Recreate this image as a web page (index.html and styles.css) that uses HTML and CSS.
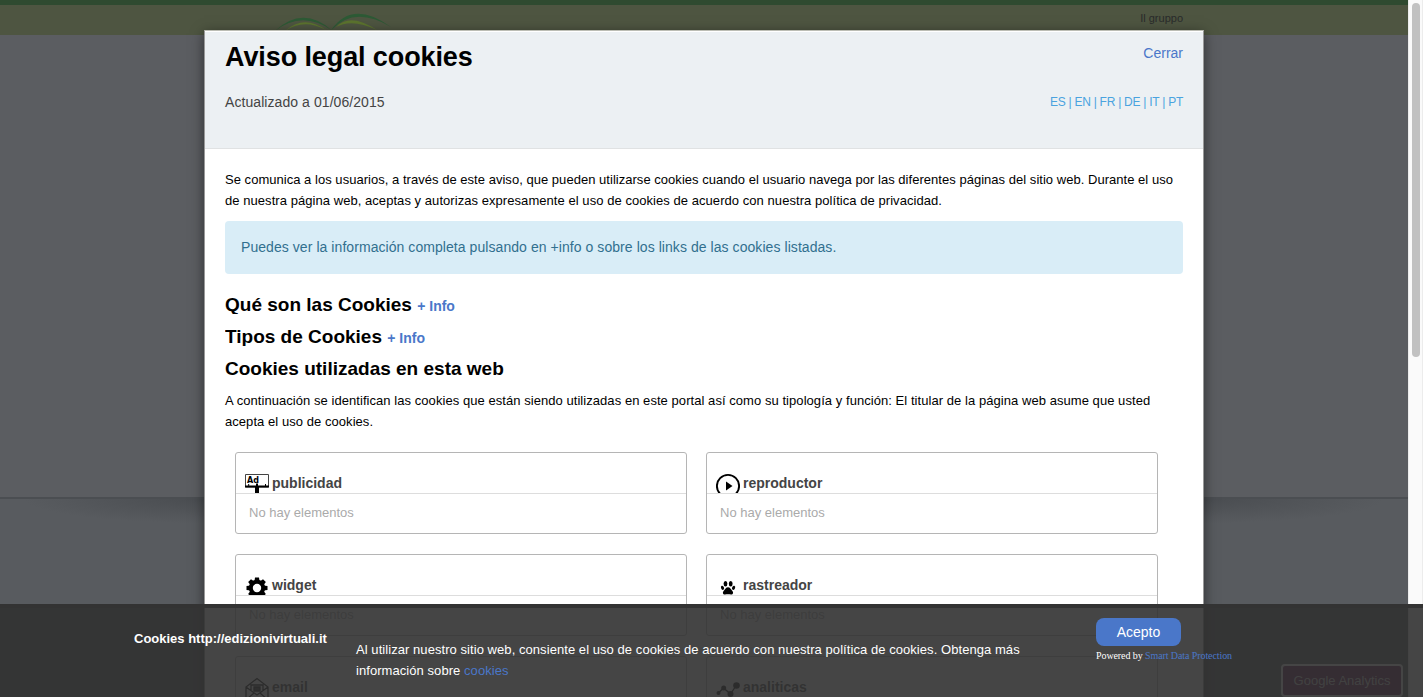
FILE: index.html
```
<!DOCTYPE html>
<html lang="es">
<head>
<meta charset="utf-8">
<title>Aviso legal cookies</title>
<link rel="stylesheet" href="styles.css">
</head>
<body>
<div class="page">
  <div class="site">
    <div class="stripe"></div>
    <div class="topbar">
      <svg class="logo" width="120" height="22" viewBox="0 0 120 22">
        <path d="M11 18Q30 1 52 17Q30 5 11 18ZM62 14Q76-1 103 17Q78 5 62 14Z" fill="#5b732e"/>
        <path d="M1 18Q29-8 58 17.500Q28-3 1 18ZM57 17.500Q78-14 117 14Q80-8 57 17.500Z" fill="#2d5a35"/>
      </svg>
      <span class="group">Il gruppo</span>
    </div>
    <div class="main"></div>
    <div class="footer"><span class="shade left"></span><span class="shade right"></span></div>
  </div>
  <div class="scrollbar"><div class="thumb"></div></div>
</div>
<div class="analytics">Google Analytics</div>

<section class="modal">
  <header class="head">
    <div class="row"><h1>Aviso legal cookies</h1><a class="close">Cerrar</a></div>
    <div class="row meta"><span>Actualizado a 01/06/2015</span><span class="langs">ES | EN | FR | DE | IT | PT</span></div>
  </header>
  <div class="body">
    <p><span class="l1">Se comunica a los usuarios, a través de este aviso, que pueden utilizarse cookies cuando el usuario navega por las diferentes páginas del sitio web. Durante el uso</span><br>de nuestra página web, aceptas y autorizas expresamente el uso de cookies de acuerdo con nuestra política de privacidad.</p>
    <div class="alert">Puedes ver la información completa pulsando en +info o sobre los links de las cookies listadas.</div>
    <h2>Qué son las Cookies <a>+ Info</a></h2>
    <h2>Tipos de Cookies <a>+ Info</a></h2>
    <h2>Cookies utilizadas en esta web</h2>
    <p class="intro">A continuación se identifican las cookies que están siendo utilizadas en este portal así como su tipología y función: El titular de la página web asume que usted<br>acepta el uso de cookies.</p>
    <div class="cards">
      <div class="card"><div class="title">
        <svg width="24" height="24" viewBox="0 0 24 24"><path d="M.5 1.500h23v12.500H.5z" fill="#fff" stroke="#444"/><path d="M0 12.500h24v2H0zM10 14h4v10h-4zM3.200 11h1v2h-1zM11 10.500h2v2h-2zM20 11h1v2h-1z"/><text x="2" y="9.500" class="ad">Ad</text></svg>publicidad</div><div class="empty">No hay elementos</div></div>
      <div class="card"><div class="title">
        <svg width="24" height="24" viewBox="0 0 24 24"><circle cx="12" cy="13" r="11.100" fill="none" stroke="#000" stroke-width="1.900"/><path d="M10 8.500l6.500 4.500-6.500 4.500z"/></svg>reproductor</div><div class="empty">No hay elementos</div></div>
      <div class="card"><div class="title">
        <svg width="24" height="24" viewBox="0 0 24 24"><g transform="translate(12 13)"><path d="M-2-10.500h4l.6 4h-5.200zM-2 10.500h4l.6-4h-5.200z" id="teeth"/><use href="#teeth" transform="rotate(45)"/><use href="#teeth" transform="rotate(90)"/><use href="#teeth" transform="rotate(135)"/><circle r="6.200" fill="none" stroke="#000" stroke-width="4"/></g></svg>widget</div><div class="empty">No hay elementos</div></div>
      <div class="card"><div class="title">
        <svg width="24" height="24" viewBox="0 0 24 24"><ellipse cx="9.500" cy="8.800" rx="1.900" ry="2.700"/><ellipse cx="14.700" cy="8.800" rx="1.900" ry="2.700"/><ellipse cx="6.500" cy="12.800" rx="1.500" ry="2.200" transform="rotate(-20 6.500 12.800)"/><ellipse cx="17.600" cy="12.800" rx="1.500" ry="2.200" transform="rotate(20 17.600 12.800)"/><path d="M12 12.300c2 0 3 2.200 4 3.200 2 2 1 4.200-1 4-2-.5-4-.5-6 0-2 .2-3-2-1-4 1-1 2-3.200 4-3.200z"/></svg>rastreador</div><div class="empty">No hay elementos</div></div>
      <div class="card"><div class="title">
        <svg width="24" height="24" viewBox="0 0 24 24" fill="none" stroke="#000" stroke-width="1.300"><path d="M1 10L12 1.500 23 10v13H1zM1 10l11 8 11-8M1 23l8-7M23 23l-8-7M6 13V8h12v5"/><path d="M9 10h6v4H9z" fill="#222"/></svg>email</div><div class="empty">No hay elementos</div></div>
      <div class="card"><div class="title">
        <svg width="24" height="24" viewBox="0 0 24 24"><path d="M2.500 16l5-5 7 6L20.500 8" fill="none" stroke="#000" stroke-width="1.300"/><circle cx="2.500" cy="16" r="2"/><circle cx="7.700" cy="11" r="2.500"/><circle cx="14.500" cy="17" r="3"/><circle cx="20.500" cy="8.500" r="3.300"/></svg>analiticas</div><div class="empty">No hay elementos</div></div>
    </div>
  </div>
</section>

<aside class="cookiebar">
  <strong>Cookies http://edizionivirtuali.it</strong>
  <p>Al utilizar nuestro sitio web, consiente el uso de cookies de acuerdo con nuestra política de cookies. Obtenga más<br>información sobre <a>cookies</a></p>
  <div class="accept"><button>Acepto</button><small>Powered by <a>Smart Data Protection</a></small></div>
</aside>
</body>
</html>
```
FILE: styles.css
```
* { box-sizing: border-box; }
html, body { height: 100%; margin: 0; overflow: hidden; }
body { font: 13px/21px "Liberation Sans", Arial, sans-serif; color: #000; white-space: nowrap; }
h1, h2, p { margin: 0; }
p { letter-spacing: .055px; }
a { color: #4a77c9; }

.page { display: flex; height: 697px; }
.site { width: 1408px; display: flex; flex-direction: column; }
.stripe { height: 5px; background: #2f4a30; }
.topbar { height: 30px; background: #4e5541; display: flex; justify-content: space-between; padding: 8px 225px 0 274px; overflow: hidden; }
.group { font-size: 11px; line-height: 11px; color: #292b2b; }
.main { flex: none; height: 462px; background: #5b5d61; }
.footer { flex: 1; background: #585b5f; border-top: 2px solid #4b4e52; display: flex; justify-content: space-between; overflow: hidden; }
.shade { width: 180px; height: 24px; margin-left: 24px; }
.left { background: radial-gradient(180px 24px at 100% 0, #4a4d51, #585b5f00); }
.right { margin: 0 24px 0 0; background: radial-gradient(180px 24px at 0 0, #4a4d51, #585b5f00); }
.scrollbar { width: 15px; background: #fafafa; border-left: 1px solid #ececec; border-right: 1px solid #ececec; padding: 3px 3px 0; }
.thumb { width: 8px; height: 354px; border-radius: 4px; background: #c1c1c1; }

.analytics { position: absolute; left: 1281px; top: 664px; width: 122px; height: 33px; border: 2px solid #fff; border-radius: 4px; background: #5a0a46; color: #d8d8d8; font-size: 13px; line-height: 29px; text-align: center; }

.modal { position: absolute; left: 204px; top: 30px; width: 1000px; height: 667px; overflow: hidden; background: #fff; border: 1px solid #999; border-bottom: 0; border-top-color: #bcbdb4; box-shadow: 0 3px 12px rgba(0, 0, 0, .5); }
.head { height: 118px; padding: 10px 20px 0; background: #ecf0f3; border-top: 1px solid #fff; border-bottom: 1px solid #e0e2e3; }
.row { display: flex; justify-content: space-between; }
h1 { font-size: 27px; line-height: 30px; letter-spacing: -.1px; }
.close { font-size: 14px; line-height: 22px; }
.meta { margin-top: 19px; font-size: 14px; line-height: 22px; letter-spacing: .07px; color: #444; }
.langs { font-size: 12px; line-height: 22px; letter-spacing: -.26px; color: #4aa3df; }
.body { padding: 20px 20px 0; }
.l1 { letter-spacing: .03px; }
.alert { height: 53px; margin: 10px 0 15px; padding-left: 16px; border-radius: 4px; background: #d9edf7; color: #31708f; font-size: 14px; line-height: 52px; letter-spacing: .062px; }
h2 { height: 25px; margin: 0 0 7px; padding-top: 2px; font-size: 19px; line-height: 27px; overflow: hidden; }
h2 a { font-size: 14px; }
.intro { margin-top: 12px; }
.cards { display: grid; grid-template-columns: 452px 452px; gap: 20px 19px; padding: 20px 10px; }
.card { height: 82px; border: 1px solid #b5b5b5; border-radius: 3px; }
.title { display: flex; height: 41px; padding: 20px 0 0 9px; gap: 3px; border-bottom: 1px solid #ddd; font-size: 14px; font-weight: bold; color: #444; overflow: hidden; }
.title svg { flex: none; }
.ad { font: bold 8px "DejaVu Sans", sans-serif; fill: #000; }
.empty { padding-left: 13px; line-height: 38px; color: #aaa; }

.cookiebar { position: absolute; left: 0; top: 604px; width: 1423px; height: 93px; display: flex; padding-left: 134px; border-top: 4px solid #333; background: rgba(49, 49, 49, .9); color: #fff; }
.cookiebar strong { width: 222px; padding-top: 20px; }
.cookiebar p { width: 740px; padding-top: 31px; letter-spacing: .06px; }
.accept { display: flex; flex-direction: column; padding-top: 10px; align-items: flex-start; }
button { width: 85px; height: 28px; padding: 0; border: 0; border-radius: 8px; background: #4a77c9; color: #fff; font: 14px "Liberation Sans", Arial, sans-serif; }
small { font: 10px/20px "Liberation Serif", serif; letter-spacing: -.09px; }
```
